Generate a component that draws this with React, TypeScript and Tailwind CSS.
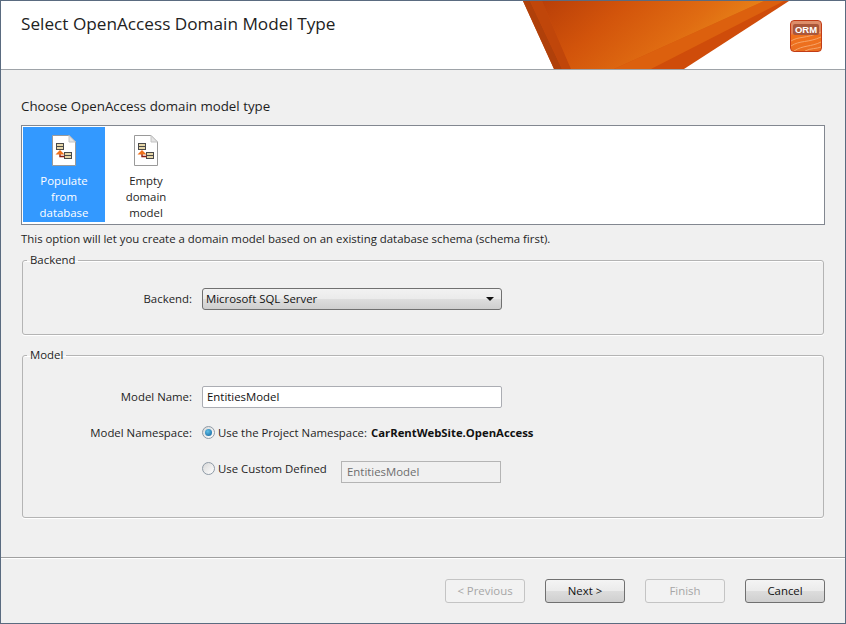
const font = "[font-family:'Open_Sans','Noto_Sans',sans-serif]"

function DocIcon() {
  return (
    <svg width="24" height="31" viewBox="0 0 24 31" className="block">
      <path d="M0.5 0.5H17L23.5 7V30.5H0.5Z" fill="#fff" stroke="#9a9a9a" />
      <path d="M17 0.5V7H23.5Z" fill="#e4e4e4" stroke="#c4c4c4" />
      <rect x="4.5" y="8.5" width="7" height="6" fill="#e6d6a8" stroke="#4a4a4a" />
      <path d="M4.5 11.5H11.5" stroke="#4a4a4a" />
      <rect x="12.5" y="17.5" width="7" height="6" fill="#e6d6a8" stroke="#4a4a4a" />
      <path d="M12.5 20.5H19.5" stroke="#4a4a4a" />
      <path d="M8 18V21.5H12.5" fill="none" stroke="#8c1f10" strokeWidth="1.4" />
      <path d="M3.5 19.5L8 15L12.5 19.5Z" fill="#f0701a" />
    </svg>
  )
}

function Banner() {
  return (
    <svg width="324" height="68" viewBox="0 0 324 68" className="absolute left-[521px] top-0">
      <defs>
        <linearGradient id="main" x1="0" y1="0" x2="1" y2="0.35">
          <stop offset="0" stopColor="#b93f08" />
          <stop offset="0.35" stopColor="#d2540b" />
          <stop offset="0.7" stopColor="#e06c12" />
          <stop offset="1" stopColor="#ea8a1a" />
        </linearGradient>
      </defs>
      <path d="M1 0H267L162 68H32Z" fill="#cf4c0a" />
      <path d="M1 0H8L40 68H32Z" fill="#b0400a" />
      <path d="M8 0H20L49 68H40Z" fill="#c0460a" />
      <path d="M242 0H262L129 68H92Z" fill="#dc600e" />
      <path d="M20 0H242L92 68H49Z" fill="url(#main)" />
    </svg>
  )
}

function OrmBadge() {
  return (
    <div className="absolute left-[789px] top-[19px] h-[32px] w-[32px] overflow-hidden rounded-[4px] border border-[#c23c16] bg-[linear-gradient(180deg,#dd8f6c_0%,#e08058_40%,#f0701a_48%,#ea6f22_100%)]">
      <svg width="30" height="30" viewBox="0 0 30 30" className="absolute top-0 left-0">
        <path d="M0 20C8 15 14 18 30 11M0 25C9 19 17 22 30 16M3 30C12 24 20 26 30 21M14 30C20 27 25 28 30 26" fill="none" stroke="#f6a468" strokeWidth="1" />
      </svg>
      <div className="relative mx-[2px] mt-[3px] rounded-[2px] bg-[#a9573a] text-center text-[9.5px] leading-[11px] font-bold text-white [font-family:'Liberation_Sans',sans-serif]">
        ORM
      </div>
    </div>
  )
}

function Tile({ label, selected }: { label: string[]; selected?: boolean }) {
  return (
    <div
      className={`flex h-[95px] w-[82px] flex-col items-center pt-[8px] ${
        selected ? 'bg-[#3399ff] text-white' : 'text-[#1e1e1e]'
      }`}
    >
      <DocIcon />
      <div className="mt-[7px] text-center text-[11.4px] leading-[16px]">
        {label.map((l) => (
          <div key={l}>{l}</div>
        ))}
      </div>
    </div>
  )
}

function Group({ title, className, children }: { title: string; className: string; children: React.ReactNode }) {
  return (
    <fieldset className={`mx-[21px] rounded-[3px] border border-[#b4b4b4] px-0 shadow-[0_1px_0_#fff,inset_0_1px_0_#fff] ${className}`}>
      <legend className="ml-[4px] px-[3px] text-[11.4px] leading-[14px] text-[#1e1e1e]">{title}</legend>
      {children}
    </fieldset>
  )
}

function Radio({ checked }: { checked?: boolean }) {
  return (
    <span className="flex h-[13px] w-[13px] items-center justify-center rounded-full border border-[#8e9aa6] bg-[linear-gradient(135deg,#d8d8d8,#ffffff)]">
      {checked && <span className="h-[7px] w-[7px] rounded-full bg-[radial-gradient(circle_at_40%_35%,#5fc0e8,#0f5f9a)]" />}
    </span>
  )
}

function WizardButton({ label, disabled }: { label: string; disabled?: boolean }) {
  return (
    <button
      className={`h-[24px] w-[80px] rounded-[3px] border text-center text-[11.4px] leading-[20px] ${
        disabled
          ? 'border-[#c4c4c4] bg-[#f2f2f2] text-[#a6a6a6]'
          : 'border-[#707070] bg-[linear-gradient(180deg,#f4f4f4_0%,#ebebeb_48%,#dcdcdc_52%,#cfcfcf_100%)] text-[#111]'
      }`}
    >
      {label}
    </button>
  )
}

export default function App() {
  return (
    <div className={`relative flex h-[624px] w-[846px] flex-col overflow-hidden border border-[#5a6b80] bg-[#f0f0f0] ${font}`}>
      {/* Header */}
      <div className="relative h-[69px] shrink-0 border-b border-[#9ea3a8] bg-white">
        <h1 className="pt-[12px] pl-[20px] text-[17.2px] leading-[22px] text-[#222]">Select OpenAccess Domain Model Type</h1>
        <Banner />
      </div>
      <OrmBadge />

      {/* Body */}
      <div className="flex-1">
        <p className="mt-[27px] pl-[20px] text-[13.3px] leading-[18px] text-[#1e1e1e]">Choose OpenAccess domain model type</p>
        <div className="mx-[20px] mt-[10px] flex h-[100px] border border-[#828790] bg-white p-[1px]">
          <Tile label={['Populate', 'from', 'database']} selected />
          <Tile label={['Empty', 'domain', 'model']} />
        </div>
        <p className="mt-[6px] pl-[20px] text-[11.4px] leading-[16px] text-[#1e1e1e]">
          This option will let you create a domain model based on an existing database schema (schema first).
        </p>

        <Group title="Backend" className="mt-[6px] h-[82px]">
          <div className="mt-[21px] flex items-center">
            <span className="w-[169px] text-right text-[11.4px] leading-[18px] text-[#1e1e1e]">Backend:</span>
            <div className="ml-[10px] flex h-[22px] w-[300px] items-center justify-between rounded-[3px] border border-[#707070] bg-[linear-gradient(180deg,#f2f2f2_0%,#ebebeb_48%,#dddddd_52%,#cfcfcf_100%)] pr-[7px] pl-[3px] text-[11.4px] text-[#111]">
              <span>Microsoft SQL Server</span>
              <span className="h-0 w-0 border-x-[4px] border-t-[4px] border-x-transparent border-t-[#111]" />
            </div>
          </div>
        </Group>

        <Group title="Model" className="mt-[13px] h-[170px]">
          <div className="mt-[24px] flex items-center">
            <span className="w-[169px] text-right text-[11.4px] leading-[20px] text-[#1e1e1e]">Model Name:</span>
            <div className="ml-[10px] flex h-[22px] w-[300px] items-center rounded-[2px] border border-[#abadb3] bg-white pl-[4px] text-[11.4px] text-[#111]">
              EntitiesModel
            </div>
          </div>
          <div className="mt-[16px] flex h-[18px] items-center">
            <span className="w-[169px] text-right text-[11.4px] leading-[18px] text-[#1e1e1e]">Model Namespace:</span>
            <div className="ml-[10px] flex items-center text-[11.4px] text-[#1e1e1e]">
              <Radio checked />
              <span className="ml-[3px]">Use the Project Namespace:</span>
              <span className="ml-[4px] text-[11.3px] font-bold text-[#111]">CarRentWebSite.OpenAccess</span>
            </div>
          </div>
          <div className="mt-[19px] flex items-center">
            <div className="ml-[179px] flex w-[139px] -translate-y-[3px] items-center text-[11.4px] text-[#1e1e1e]">
              <Radio />
              <span className="ml-[3px]">Use Custom Defined</span>
            </div>
            <div className="flex h-[22px] w-[160px] items-center border border-[#b4b4b4] bg-[#f0f0f0] pl-[5px] text-[11.4px] text-[#6d6d6d]">
              EntitiesModel
            </div>
          </div>
        </Group>
      </div>

      {/* Footer */}
      <div className="flex h-[66px] shrink-0 items-start justify-end gap-[20px] border-t border-[#a0a0a0] pt-[21px] pr-[20px] shadow-[inset_0_1px_0_#fff]">
        <WizardButton label="< Previous" disabled />
        <WizardButton label="Next >" />
        <WizardButton label="Finish" disabled />
        <WizardButton label="Cancel" />
      </div>
    </div>
  )
}
